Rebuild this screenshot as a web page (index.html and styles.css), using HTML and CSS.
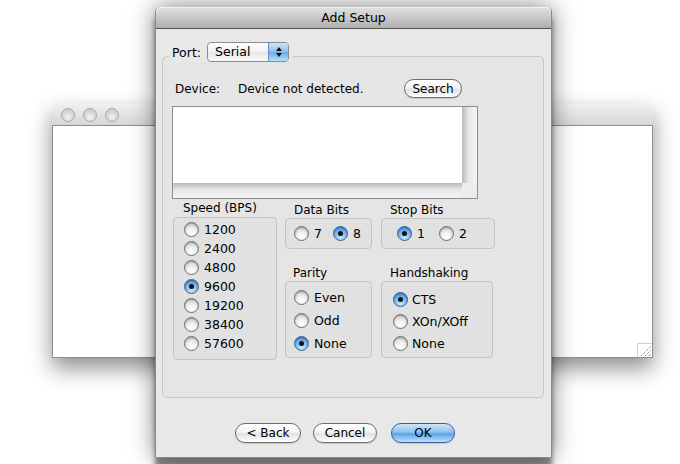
FILE: index.html
```html
<!DOCTYPE html>
<html lang="en">
<head>
    <meta charset="UTF-8">
    <title>Add Setup</title>
    <link rel="stylesheet" href="styles.css">
</head>
<body>
    <div class="desktop">
        <!-- window behind the sheet -->
        <div class="window">
            <div class="window-title">
                <span class="light"></span>
                <span class="light"></span>
                <span class="light"></span>
            </div>
            <div class="window-body">
                <svg class="grip" width="15" height="14" viewBox="0 0 15 14">
                    <path d="M0.5 14 V0.5 H15" fill="none" stroke="#d0d0d0"/>
                    <path d="M4 13 L14 3 M8 13 L14 7 M12 13 L14 11" stroke="#8c8c8c" stroke-width="1" stroke-dasharray="1.4 0.8"/>
                </svg>
            </div>
        </div>

        <!-- the sheet -->
        <div class="sheet">
            <div class="sheet-title">Add Setup</div>
            <div class="sheet-body">
                <div class="port-row">
                    <span>Port:</span>
                    <div class="popup">
                        <span class="popup-value">Serial</span>
                        <span class="popup-arrows">
                            <svg width="8" height="12" viewBox="0 0 8 12">
                                <path d="M4 1 L7 5 H1 Z M4 11 L7 7 H1 Z" fill="#111"/>
                            </svg>
                        </span>
                    </div>
                </div>

                <div class="port-box">
                    <div class="device-row">
                        <span class="device-label">Device:</span>
                        <span class="device-status">Device not detected.</span>
                        <button class="push search">Search</button>
                    </div>

                    <div class="listbox">
                        <div class="list-area"></div>
                        <div class="vscroll"></div>
                        <div class="hscroll"></div>
                        <div class="corner"></div>
                    </div>

                    <div class="groups">
                        <div class="group speed">
                            <div class="group-label">Speed (BPS)</div>
                            <div class="group-box speed-box">
                                <div class="radio-row"><span class="radio"></span>1200</div>
                                <div class="radio-row"><span class="radio"></span>2400</div>
                                <div class="radio-row"><span class="radio"></span>4800</div>
                                <div class="radio-row"><span class="radio on"></span>9600</div>
                                <div class="radio-row"><span class="radio"></span>19200</div>
                                <div class="radio-row"><span class="radio"></span>38400</div>
                                <div class="radio-row"><span class="radio"></span>57600</div>
                            </div>
                        </div>

                        <div class="col col-mid">
                            <div class="group">
                                <div class="group-label">Data Bits</div>
                                <div class="group-box inline-box data-box">
                                    <div class="radio-row"><span class="radio"></span>7</div>
                                    <div class="radio-row"><span class="radio on"></span>8</div>
                                </div>
                            </div>
                            <div class="group lower">
                                <div class="group-label parity-label">Parity</div>
                                <div class="group-box parity-box">
                                    <div class="radio-row"><span class="radio"></span>Even</div>
                                    <div class="radio-row"><span class="radio"></span>Odd</div>
                                    <div class="radio-row"><span class="radio on"></span>None</div>
                                </div>
                            </div>
                        </div>

                        <div class="col col-right">
                            <div class="group">
                                <div class="group-label">Stop Bits</div>
                                <div class="group-box inline-box stop-box">
                                    <div class="radio-row"><span class="radio on"></span>1</div>
                                    <div class="radio-row"><span class="radio"></span>2</div>
                                </div>
                            </div>
                            <div class="group lower">
                                <div class="group-label">Handshaking</div>
                                <div class="group-box hand-box">
                                    <div class="radio-row"><span class="radio on"></span>CTS</div>
                                    <div class="radio-row"><span class="radio"></span>XOn/XOff</div>
                                    <div class="radio-row"><span class="radio"></span>None</div>
                                </div>
                            </div>
                        </div>
                    </div>
                </div>

                <div class="buttons">
                    <button class="push back">&lt; Back</button>
                    <button class="push cancel">Cancel</button>
                    <button class="push ok">OK</button>
                </div>
            </div>
        </div>
    </div>
</body>
</html>
```

FILE: styles.css
```css
/* page */
body {
    margin: 0;
    background: #ffffff;
    font-family: 'DejaVu Sans', 'Liberation Sans', sans-serif;
    font-size: 12px;
    color: #000;
}

.desktop {
    position: relative;
    width: 680px;
    height: 464px;
    overflow: hidden;
}

/* background window */
.window {
    position: absolute;
    left: 52px;
    top: 104px;
    width: 601px;
    height: 254px;
    display: flex;
    flex-direction: column;
    box-shadow: 0 10px 22px rgba(0, 0, 0, 0.45);
    border-radius: 4px 4px 0 0;
}

.window-title {
    height: 21px;
    display: flex;
    align-items: center;
    gap: 8px;
    padding-left: 9px;
    background: linear-gradient(#f0f0f0, #d6d6d6);
    border-bottom: 1px solid #8e8e8e;
    border-radius: 4px 4px 0 0;
}

.light {
    width: 12px;
    height: 12px;
    border-radius: 50%;
    border: 1px solid #a9a9a9;
    background: radial-gradient(circle at 50% 70%, #f2f2f2, #cfcfcf 70%);
}

.window-body {
    flex: 1;
    background: #fff;
    border: 1px solid #8e8e8e;
    border-top: none;
    display: flex;
    justify-content: flex-end;
    align-items: flex-end;
}

.grip {
    display: block;
}

/* sheet */
.sheet {
    position: absolute;
    left: 155px;
    top: 7px;
    width: 395px;
    height: 450px;
    border-left: 1px solid #8a8a8a;
    border-right: 1px solid #8a8a8a;
    border-bottom: 1px solid #8a8a8a;
    border-radius: 5px 5px 0 0;
    background: #e8e8e8;
    box-shadow: 0 0 24px rgba(0, 0, 0, 0.5), 0 10px 5px rgba(0, 0, 0, 0.45);
}

.sheet-title {
    height: 21px;
    line-height: 21px;
    text-align: center;
    font-size: 12.5px;
    background: linear-gradient(#e2e2e2, #b0b0b0);
    border-bottom: 1px solid #515151;
    border-radius: 5px 5px 0 0;
    box-shadow: inset 0 1px 0 #f2f2f2;
}

.sheet-body {
    padding: 13px 0 0 6px;
}

.port-row {
    position: relative;
    z-index: 1;
    display: inline-flex;
    align-items: center;
    gap: 6px;
    height: 20px;
    margin-left: 7px;
    padding: 0 4px 0 3px;
    background: #e8e8e8;
    font-size: 12.5px;
}

.popup {
    display: flex;
    width: 80px;
    height: 18px;
    border: 1px solid #8b8b8b;
    border-radius: 4px;
    background: linear-gradient(#ffffff, #f1f1f1 50%, #e6e6e6 51%, #fafafa);
    overflow: hidden;
}

.popup-value {
    flex: 1;
    padding-left: 7px;
    line-height: 18px;
}

.popup-arrows {
    width: 19px;
    display: flex;
    align-items: center;
    justify-content: center;
    border-left: 1px solid #6b8fbf;
    background: linear-gradient(#cfe5f9, #8fc0ee 50%, #6aa9e8 51%, #b9def9);
}

.port-box {
    width: 371px;
    height: 318px;
    margin-top: -6px;
    padding: 22px 0 0 9px;
    border: 1px solid #c6c6c6;
    border-radius: 5px;
    background: #e5e5e5;
}

.device-row {
    display: flex;
    align-items: center;
    height: 19px;
    padding-left: 3px;
}

.device-label {
    width: 63px;
}

.device-status {
    width: 166px;
}

/* push buttons */
.push {
    font-family: inherit;
    font-size: 12px;
    color: #000;
    height: 20px;
    padding: 0;
    border: 1px solid #6d6d6d;
    border-radius: 10px;
    background: linear-gradient(#ffffff, #f4f4f4 45%, #e2e2e2 55%, #ffffff);
    box-shadow: 0 1px 1px rgba(0, 0, 0, 0.15);
}

.search {
    width: 58px;
    height: 19px;
}

.listbox {
    width: 304px;
    height: 91px;
    margin-top: 8px;
    border: 1px solid #8d8d8d;
    display: grid;
    grid-template-columns: 1fr 15px;
    grid-template-rows: 1fr 15px;
}

.list-area {
    background: #fff;
}

.vscroll {
    background: linear-gradient(90deg, #b9b9b9, #e8e8e8 45%, #f4f4f4);
}

.hscroll {
    background: linear-gradient(#b9b9b9, #e8e8e8 45%, #f4f4f4);
}

.corner {
    background: #ececec;
}

/* option groups */
.groups {
    display: flex;
    margin-top: 1px;
    margin-left: 1px;
}

.col {
    display: flex;
    flex-direction: column;
    margin-top: 2px;
}

.col-mid {
    width: 87px;
    margin-left: 8px;
}

.col-right {
    width: 114px;
    margin-left: 9px;
}

.speed {
    width: 104px;
}

.group-label {
    height: 16px;
    line-height: 16px;
    padding-left: 9px;
}

.speed .group-label {
    height: 17px;
    padding-left: 10px;
}

.parity-label {
    padding-left: 8px;
}

.lower {
    margin-top: 16px;
}

.group-box {
    border: 1px solid #c4c4c4;
    border-radius: 4px;
    background: #e1e1e1;
    font-size: 12.5px;
}

.speed-box {
    height: 139px;
    padding: 2px 0 0 10px;
}

.speed-box .radio-row {
    height: 19px;
}

.inline-box {
    height: 29px;
    display: flex;
    align-items: center;
}

.data-box {
    padding-left: 8px;
    gap: 11px;
}

.stop-box {
    padding-left: 15px;
    gap: 14px;
}

.parity-box {
    height: 71px;
    padding: 4px 0 0 8px;
}

.parity-box .radio-row {
    height: 23px;
}

.hand-box {
    height: 69px;
    padding: 6px 0 0 11px;
    margin-right: 2px;
}

.hand-box .radio-row {
    height: 22px;
    gap: 4px;
}

.radio-row {
    display: flex;
    align-items: center;
    gap: 5px;
}

/* aqua radios */
.radio {
    position: relative;
    width: 13px;
    height: 13px;
    border-radius: 50%;
    border: 1px solid #6f6f6f;
    background: radial-gradient(circle at 50% 78%, #ffffff, #f0f0f0 40%, #c4c4c4 90%);
    box-shadow: inset 0 1px 1px rgba(0, 0, 0, 0.25);
    flex: none;
}

.radio.on {
    border-color: #3d5f8f;
    background: radial-gradient(circle at 50% 80%, #c8e9ff, #76b5ee 50%, #3b7fd4 95%);
}

.radio.on::after {
    content: "";
    position: absolute;
    left: 4px;
    top: 4px;
    width: 5px;
    height: 5px;
    border-radius: 50%;
    background: #111;
}

/* bottom buttons */
.buttons {
    display: flex;
    margin-top: 25px;
    padding-left: 73px;
}

.back {
    width: 66px;
}

.cancel {
    width: 64px;
    margin-left: 12px;
}

.ok {
    width: 64px;
    margin-left: 14px;
    border-color: #3f5f97;
    background: linear-gradient(#cde6fb, #8ec3f0 45%, #5aa2ea 55%, #bfe3fc);
}
```
